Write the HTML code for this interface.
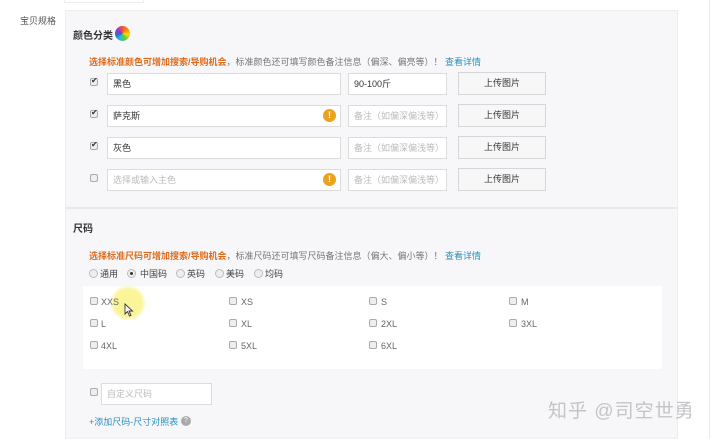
<!DOCTYPE html>
<html><head><meta charset="utf-8"><style>
*{margin:0;padding:0;box-sizing:border-box}
body{width:720px;height:439px;background:#fff;position:relative;overflow:hidden;font-family:"Liberation Sans","Noto Sans CJK SC",sans-serif;font-size:9px;color:#333}
.a{position:absolute;white-space:nowrap}
.panel{position:absolute;left:65px;top:10px;width:613px;height:429px;background:#f7f7f9;border:1px solid #eeeef0}
.inp{position:absolute;height:22px;background:#fff;border:1px solid #dcdcdc;line-height:20px;padding-left:5px;font-size:9px}
.btn{position:absolute;height:23px;width:88px;background:#f7f7f7;border:1px solid #d6d6d6;text-align:center;line-height:21px;font-size:9px;color:#333}
.cb{position:absolute;width:8px;height:8px;border:1px solid #aaa;border-radius:2px;background:#eee}
.cb.on::after{content:"✔";position:absolute;left:0;top:-3px;font-size:8px;color:#333}
.warn{position:absolute;width:13px;height:13px;border-radius:50%;background:#e9a21e;color:#fff;font-size:9px;font-weight:bold;text-align:center;line-height:13px}
.ph{color:#bbb}
.or{color:#e06a1a;font-weight:bold}
.gy{color:#777}
.bl{color:#2a8fc1}
.rd{position:absolute;width:9px;height:9px;border:1px solid #bbb;border-radius:50%;background:#eee}
.lab{position:absolute;font-size:9px;color:#666}
</style></head><body>
<div class="a" style="left:64px;top:0;width:80px;height:3px;border:1px solid #eee;border-top:none"></div>
<div class="a" style="left:20px;top:14px;font-size:9px;color:#555">宝贝规格</div>
<div class="a" style="left:709px;top:0;width:1px;height:439px;background:#dfeeee"></div>
<div class="panel"></div>
<div class="a" style="left:73px;top:27px;font-size:10px;font-weight:bold">颜色分类</div>
<div class="a" style="left:115px;top:26px;width:15px;height:15px;border-radius:50%;background:conic-gradient(#e53 0,#f90 60deg,#fd0 100deg,#6c3 150deg,#2bd 210deg,#36c 260deg,#a3c 310deg,#e53 360deg)"></div>
<div class="a" style="left:89px;top:55px"><span class="or">选择标准颜色可增加搜索/导购机会</span><span class="gy">，标准颜色还可填写颜色备注信息（偏深、偏亮等）！</span> <span class="bl">查看详情</span></div>

<div class="cb on" style="left:90px;top:78px"></div>
<div class="inp" style="left:107px;top:73px;width:234px">黑色</div>
<div class="inp" style="left:348px;top:73px;width:99px">90-100斤</div>
<div class="btn" style="left:458px;top:72px">上传图片</div>

<div class="cb on" style="left:90px;top:110px"></div>
<div class="inp" style="left:107px;top:105px;width:234px">萨克斯</div>
<div class="warn" style="left:323px;top:109px">!</div>
<div class="inp ph" style="left:348px;top:105px;width:99px">备注（如偏深偏浅等）</div>
<div class="btn" style="left:458px;top:104px">上传图片</div>

<div class="cb on" style="left:90px;top:142px"></div>
<div class="inp" style="left:107px;top:137px;width:234px">灰色</div>
<div class="inp ph" style="left:348px;top:137px;width:99px">备注（如偏深偏浅等）</div>
<div class="btn" style="left:458px;top:136px">上传图片</div>

<div class="cb" style="left:90px;top:174px"></div>
<div class="inp ph" style="left:107px;top:169px;width:234px">选择或输入主色</div>
<div class="warn" style="left:323px;top:173px">!</div>
<div class="inp ph" style="left:348px;top:169px;width:99px">备注（如偏深偏浅等）</div>
<div class="btn" style="left:458px;top:168px">上传图片</div>

<div class="a" style="left:66px;top:207px;width:611px;height:2px;background:#e8e8ea"></div>
<div class="a" style="left:73px;top:220px;font-size:10px;font-weight:bold">尺码</div>
<div class="a" style="left:89px;top:249px"><span class="or">选择标准尺码可增加搜索/导购机会</span><span class="gy">，标准尺码还可填写尺码备注信息（偏大、偏小等）！</span> <span class="bl">查看详情</span></div>

<div class="rd" style="left:89px;top:269px"></div><div class="lab" style="left:100px;top:267px;color:#444">通用</div>
<div class="rd" style="left:127px;top:269px"></div><div class="a" style="left:130px;top:272px;width:3px;height:3px;border-radius:50%;background:#333"></div><div class="lab" style="left:140px;top:267px;color:#444">中国码</div>
<div class="rd" style="left:176px;top:269px"></div><div class="lab" style="left:187px;top:267px;color:#444">英码</div>
<div class="rd" style="left:215px;top:269px"></div><div class="lab" style="left:226px;top:267px;color:#444">美码</div>
<div class="rd" style="left:254px;top:269px"></div><div class="lab" style="left:265px;top:267px;color:#444">均码</div>

<div class="a" style="left:83px;top:286px;width:579px;height:83px;background:#fff"></div>
<div class="a" style="left:110px;top:285px;width:36px;height:36px;border-radius:50%;background:radial-gradient(#fbf59a 55%,rgba(251,245,154,0) 72%)"></div>
<div class="cb" style="left:90px;top:297px"></div><div class="lab" style="left:101px;top:297px">XXS</div>
<div class="cb" style="left:229px;top:297px"></div><div class="lab" style="left:241px;top:297px">XS</div>
<div class="cb" style="left:369px;top:297px"></div><div class="lab" style="left:381px;top:297px">S</div>
<div class="cb" style="left:509px;top:297px"></div><div class="lab" style="left:521px;top:297px">M</div>
<div class="cb" style="left:90px;top:319px"></div><div class="lab" style="left:101px;top:319px">L</div>
<div class="cb" style="left:229px;top:319px"></div><div class="lab" style="left:241px;top:319px">XL</div>
<div class="cb" style="left:369px;top:319px"></div><div class="lab" style="left:381px;top:319px">2XL</div>
<div class="cb" style="left:509px;top:319px"></div><div class="lab" style="left:521px;top:319px">3XL</div>
<div class="cb" style="left:90px;top:341px"></div><div class="lab" style="left:101px;top:341px">4XL</div>
<div class="cb" style="left:229px;top:341px"></div><div class="lab" style="left:241px;top:341px">5XL</div>
<div class="cb" style="left:369px;top:341px"></div><div class="lab" style="left:381px;top:341px">6XL</div>
<svg class="a" style="left:124px;top:303px" width="10" height="14" viewBox="0 0 10 14"><path d="M1 1 L1 11 L3.5 8.5 L5.5 13 L7 12.3 L5 8 L8.5 8 Z" fill="#fff" stroke="#333" stroke-width="0.9"/></svg>

<div class="cb" style="left:90px;top:388px"></div>
<div class="inp ph" style="left:101px;top:383px;width:111px">自定义尺码</div>
<div class="a bl" style="left:89px;top:415px">+添加尺码-尺寸对照表</div>
<div class="a" style="left:181px;top:416px;width:10px;height:10px;border-radius:50%;background:#aaa;color:#fff;font-size:7px;text-align:center;line-height:10px">?</div>

<div class="a" style="left:548px;top:396px;font-size:19px;color:#c4c4c8;letter-spacing:1px">知乎 @司空世勇</div>
</body></html>
